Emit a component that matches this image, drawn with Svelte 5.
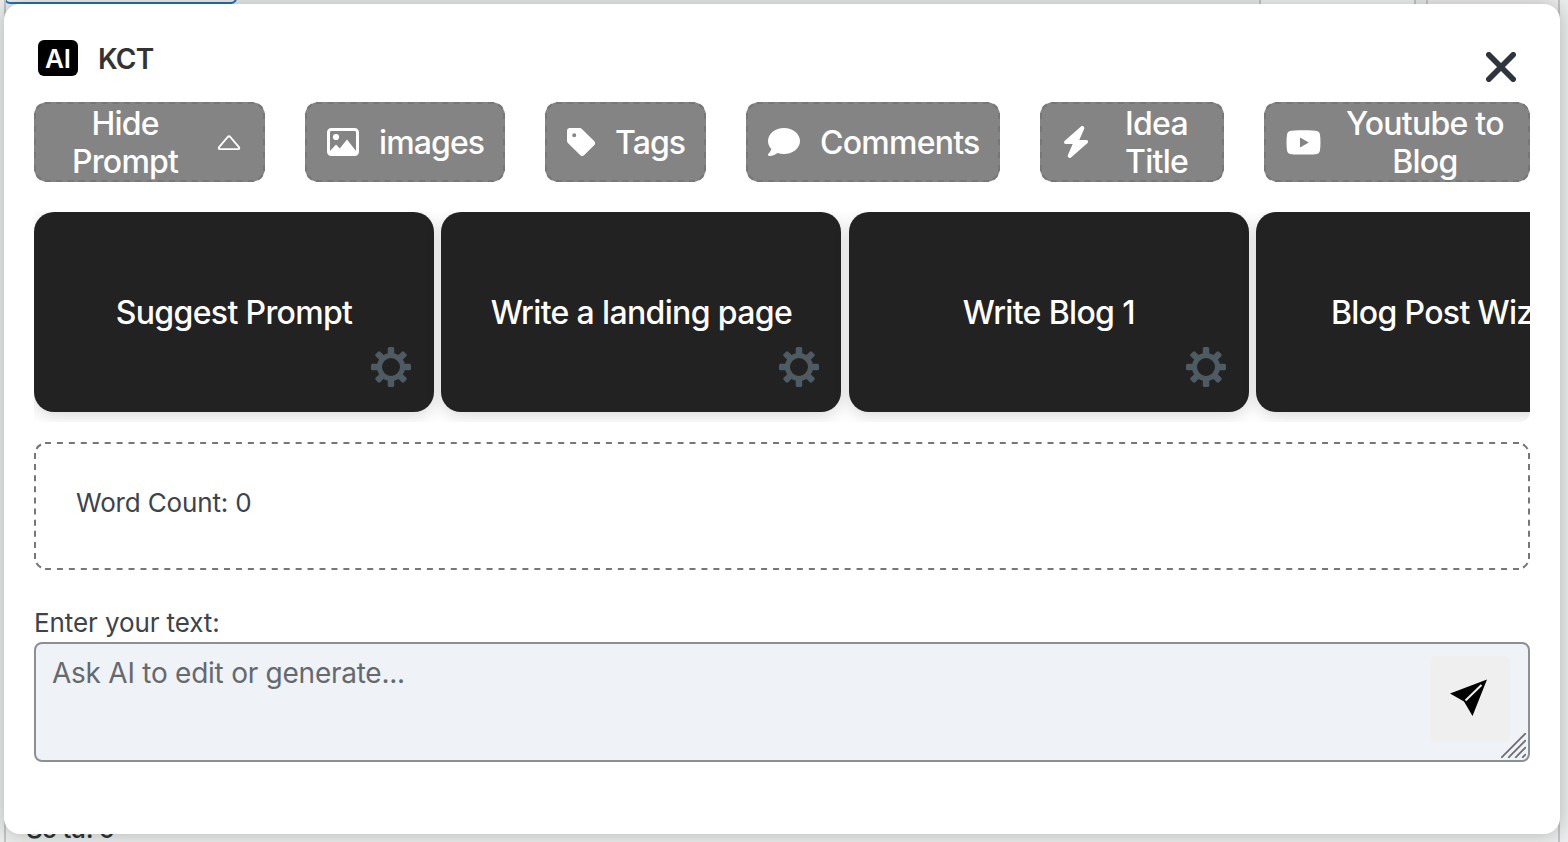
<script>
  const tools = [
    { id: 'hide', lines: ['Hide', 'Prompt'], width: 231 },
    { id: 'image', lines: ['images'], width: 200 },
    { id: 'tag', lines: ['Tags'], width: 161 },
    { id: 'comment', lines: ['Comments'], width: 254 },
    { id: 'bolt', lines: ['Idea', 'Title'], width: 184 },
    { id: 'youtube', lines: ['Youtube to', 'Blog'], width: 266 }
  ];
  const prompts = ['Suggest Prompt', 'Write a landing page', 'Write Blog 1', 'Blog Post Wizard'];
  const teeth = [0, 45, 90, 135, 180, 225, 270, 315];

  // Dashes of 6px whose gaps stretch so that both ends of a side carry a full dash.
  const dash = (length) => {
    const steps = Math.floor((length - 6) / 11);
    const pitch = length > 1000 ? (length - 6) / 123 : (length - 6) / steps;
    return `6 ${pitch - 6}`;
  };
</script>

{#snippet dashed(w, h)}
  <svg class="outline" width={w} height={h} fill="none" stroke="#777" stroke-width="2">
    <path d="M11 1H{w - 11}M11 {h - 1}H{w - 11}" stroke-dasharray={dash(w - 22)} />
    <path d="M1 11V{h - 11}M{w - 1} 11V{h - 11}" stroke-dasharray={dash(h - 22)} />
    <path d="M2.500 7Q4 4 7 2.500M{w - 2.5} 7Q{w - 4} 4 {w - 7} 2.500M2.500 {h - 7}Q4 {h - 4} 7 {h - 2.5}M{w - 2.5} {h - 7}Q{w - 4} {h - 4} {w - 7} {h - 2.5}" />
  </svg>
{/snippet}

<div class="page">
  <div class="tab"></div>
  <div class="column c1"></div>
  <div class="column c2"></div>
  <div class="rule left"></div>
  <div class="rule right"></div>
  <span class="behind">Số từ: 0</span>

  <main class="modal">
    <header>
      <div class="logo"><span>AI</span></div>
      <h1>KCT</h1>
      <button class="close" aria-label="Close">
        <svg width="30" height="30" viewBox="0 0 30 30"><path d="M2.8 2.8 27.2 27.2M27.2 2.8 2.8 27.2" stroke="#2f353e" stroke-width="5.6" stroke-linecap="round" /></svg>
      </button>
    </header>

    <nav>
      {#each tools as t}
        <button class="tool {t.id}" style="width:{t.width}px">
          {@render dashed(t.width, 80)}
          {#if t.id === 'image'}
            <svg width="32" height="28" viewBox="0 0 32 28"><rect x="1.5" y="1.5" width="29" height="25" rx="2.8" fill="none" stroke="#fff" stroke-width="3" /><circle cx="9" cy="9" r="3.1" fill="#fff" /><path d="M3 26v-3l6-6.5 3.8 4L20 11.5l9 11.500v3z" fill="#fff" /></svg>
          {:else if t.id === 'tag'}
            <svg width="28" height="28" viewBox="0 0 28 28"><path fill="#fff" fill-rule="evenodd" d="M3 0h9.8c.8 0 1.5.3 2.1.9l12.2 12.2a3 3 0 0 1 0 4.200l-9.800 9.800a3 3 0 0 1-4.200 0L.9 14.900A3 3 0 0 1 0 12.800V3a3 3 0 0 1 3-3zM7.200 5.200a2 2 0 1 0 0 4 2 2 0 0 0 0-4z" /></svg>
          {:else if t.id === 'comment'}
            <svg width="32" height="28" viewBox="0 0 32 28"><path fill="#fff" d="M16 0c8.8 0 16 5.8 16 13s-7.200 13-16 13c-2.300 0-4.500-.4-6.500-1.100C7.700 26.200 4.800 28 1.500 28c-1.500 0-1.900-1.600-.9-2.500 0 0 2-2.100 2.800-4.500C1.200 18.800 0 16 0 13 0 5.800 7.200 0 16 0z" /></svg>
          {:else if t.id === 'bolt'}
            <svg width="24" height="32" viewBox="0 0 24 32"><path fill="#fff" d="M19.500.5c.9.700 1 1.500.600 2.500L15.300 14h7c1.800 0 2.300 2 1 3.200L7 31.500c-.800.700-1.800.600-2.500.100-.8-.600-1-1.600-.6-2.500L8.700 18h-7C0 18-.6 16 .8 14.800L17 .5c.800-.6 1.700-.6 2.500 0z" /></svg>
          {:else if t.id === 'youtube'}
            <svg width="35" height="25" viewBox="0 0 35 25"><path fill="#fff" fill-rule="evenodd" d="M17.500.3c7 0 11.500.2 13.500.7a4 4 0 0 1 2.900 3c.8 5 .8 12 0 17a4 4 0 0 1-2.900 2.900c-4 .9-23 .9-27 0A4 4 0 0 1 1.100 21c-.8-5-.8-12 0-17A4 4 0 0 1 4 1C6 .5 10.500.3 17.500.3zM14 7.400v10l8.800-5z" /></svg>
          {/if}
          <span class="label">{#each t.lines as line}<span>{line}</span>{/each}</span>
          {#if t.id === 'hide'}
            <svg class="chevron" width="24" height="16" viewBox="0 0 24 16"><path d="M10.700 2 2.100 12.200c-.8 1-.4 1.900.8 1.900h18.200c1.200 0 1.600-.9.8-1.900L13.300 2c-.9-1-1.700-1-2.600 0z" fill="none" stroke="#fff" stroke-width="1.900" /></svg>
          {/if}
        </button>
      {/each}
    </nav>

    <section class="prompts">
      {#each prompts as p, i}
        <article>
          <span class="p{i}">{p}</span>
          <svg class="gear" width="40" height="40" viewBox="-20 -20 40 40">
            <circle r="11.500" fill="none" stroke="#4f5b62" stroke-width="5" />
            {#each teeth as a}<rect x="-3.200" y="-20" width="6.400" height="8.500" rx="1.500" fill="#4f5b62" transform="rotate({a})" />{/each}
          </svg>
        </article>
      {/each}
    </section>

    <section class="count">{@render dashed(1496, 128)}<span>Word Count: 0</span></section>

    <div class="entry-label">Enter your text:</div>
    <div class="entry">
      <span class="placeholder">Ask AI to edit or generate...</span>
      <button class="send" aria-label="Send">
        <svg width="38" height="38" viewBox="0 0 38 38"><path d="M37 .5 0 14.500l14 8L22.500 37z" /><path d="M15.500 21.500 31.500 6" stroke="#efefef" stroke-width="2" fill="none" /></svg>
      </button>
      <svg class="grip" width="25" height="25" viewBox="0 0 25 25"><path d="M.7 24.300 24.300.7M7.700 24.300 24.300 7.700M14.700 24.300l9.600-9.600M21.700 24.300l2.600-2.600" stroke="#696b6e" stroke-width="1.700" stroke-linecap="round" /></svg>
    </div>
  </main>
</div>

<style>
  :global(body) { margin: 0; }
  * { box-sizing: border-box; }
  button { border: 0; padding: 0; font: inherit; }
  svg { display: block; flex: none; }
  .page { position: relative; width: 1568px; height: 842px; overflow: hidden; padding: 4px; background: #eceded; font-family: Inter, "Liberation Sans", sans-serif; }
  .tab { position: absolute; left: 4px; top: -20px; width: 233px; height: 24px; border: 2px solid #2271b1; border-radius: 6px; background: #f0f0f1; }
  .column { position: absolute; top: -2px; height: 20px; border: 2px solid #c7c8ca; background: #f3f5f4; }
  .c1 { left: 1259px; width: 157px; }
  .c2 { left: 1426px; width: 134px; background: #eee; }
  .rule { position: absolute; width: 2px; top: 0; height: 842px; background: #c3c4c7; }
  .left { left: 4px; }
  .right { left: 1558px; }
  .behind { position: absolute; left: 26px; top: 814px; font-size: 26px; line-height: 30px; font-weight: 500; color: #2c3338; letter-spacing: -1px; }
  .modal { position: relative; width: 1556px; height: 830px; padding: 0 30px; border-radius: 16px; background: #fff; box-shadow: 0 0 20px rgba(0, 0, 0, .25); }
  header { display: flex; height: 98px; padding: 36px 14px 0 4px; }
  .logo { width: 40px; height: 36px; border-radius: 6px; background: #000; color: #fff; font-weight: 600; font-size: 26px; line-height: 37px; text-align: center; }
  h1 { margin: 0 0 0 20px; font-size: 28px; line-height: 39px; font-weight: 600; color: #333; letter-spacing: -.8px; }
  .close { margin: 12px 0 0 auto; width: 30px; height: 30px; background: none; }
  nav { display: flex; gap: 40px; height: 80px; }
  .tool { position: relative; display: flex; align-items: center; flex: none; height: 80px; padding: 0 22px; border-radius: 14px; background: #848484; color: #fff; font-size: 32px; line-height: 38px; font-weight: 450; letter-spacing: -.75px; white-space: nowrap; }
  .outline { position: absolute; left: 0; top: 0; }
  .label { display: flex; flex-direction: column; align-items: center; margin: 2px 0 0 20px; }
  .image .label, .tag .label { letter-spacing: -.9px; }
  .hide .label { margin-left: 16px; }
  .chevron { margin: 2px 0 0 39px; }
  .bolt .label { margin-left: 39px; }
  .bolt > svg:not(.outline) { position: relative; left: 2px; }
  .youtube .label { margin-left: 25px; }
  .prompts { display: flex; gap: 7.4px; height: 210px; margin-top: 30px; overflow: hidden; border-radius: 0 0 10px 0; }
  article { position: relative; display: flex; align-items: center; justify-content: center; flex: none; width: 400px; height: 200px; border-radius: 20px; background: #222; box-shadow: 0 4px 16px rgba(0, 0, 0, .15); color: #fff; font-size: 32px; line-height: 38px; font-weight: 450; letter-spacing: -.65px; white-space: nowrap; }
  article span { margin-top: 2px; }
  .gear { position: absolute; right: 22.8px; bottom: 25px; }
  .count { position: relative; height: 128px; margin-top: 20px; padding: 44px 42px; border-radius: 14px; color: #3c434a; font-size: 26px; line-height: 34px; letter-spacing: -.15px; }
  .entry-label { height: 36px; margin-top: 36px; color: #3c434a; font-size: 26px; line-height: 34px; letter-spacing: -.1px; }
  .entry { position: relative; display: flex; justify-content: space-between; height: 120px; padding: 12px 18px 0 16px; border: 2px solid #8c8f94; border-radius: 8px; background: #eff3f8; }
  .placeholder { color: #65696e; font-size: 28px; line-height: 35px; letter-spacing: -.25px; }
  .send { display: flex; align-items: center; justify-content: center; width: 80px; height: 86px; padding: 0 2px 2px 0; border-radius: 6px; background: #efefef; }
  .grip { position: absolute; right: 2px; bottom: 2px; }
</style>
